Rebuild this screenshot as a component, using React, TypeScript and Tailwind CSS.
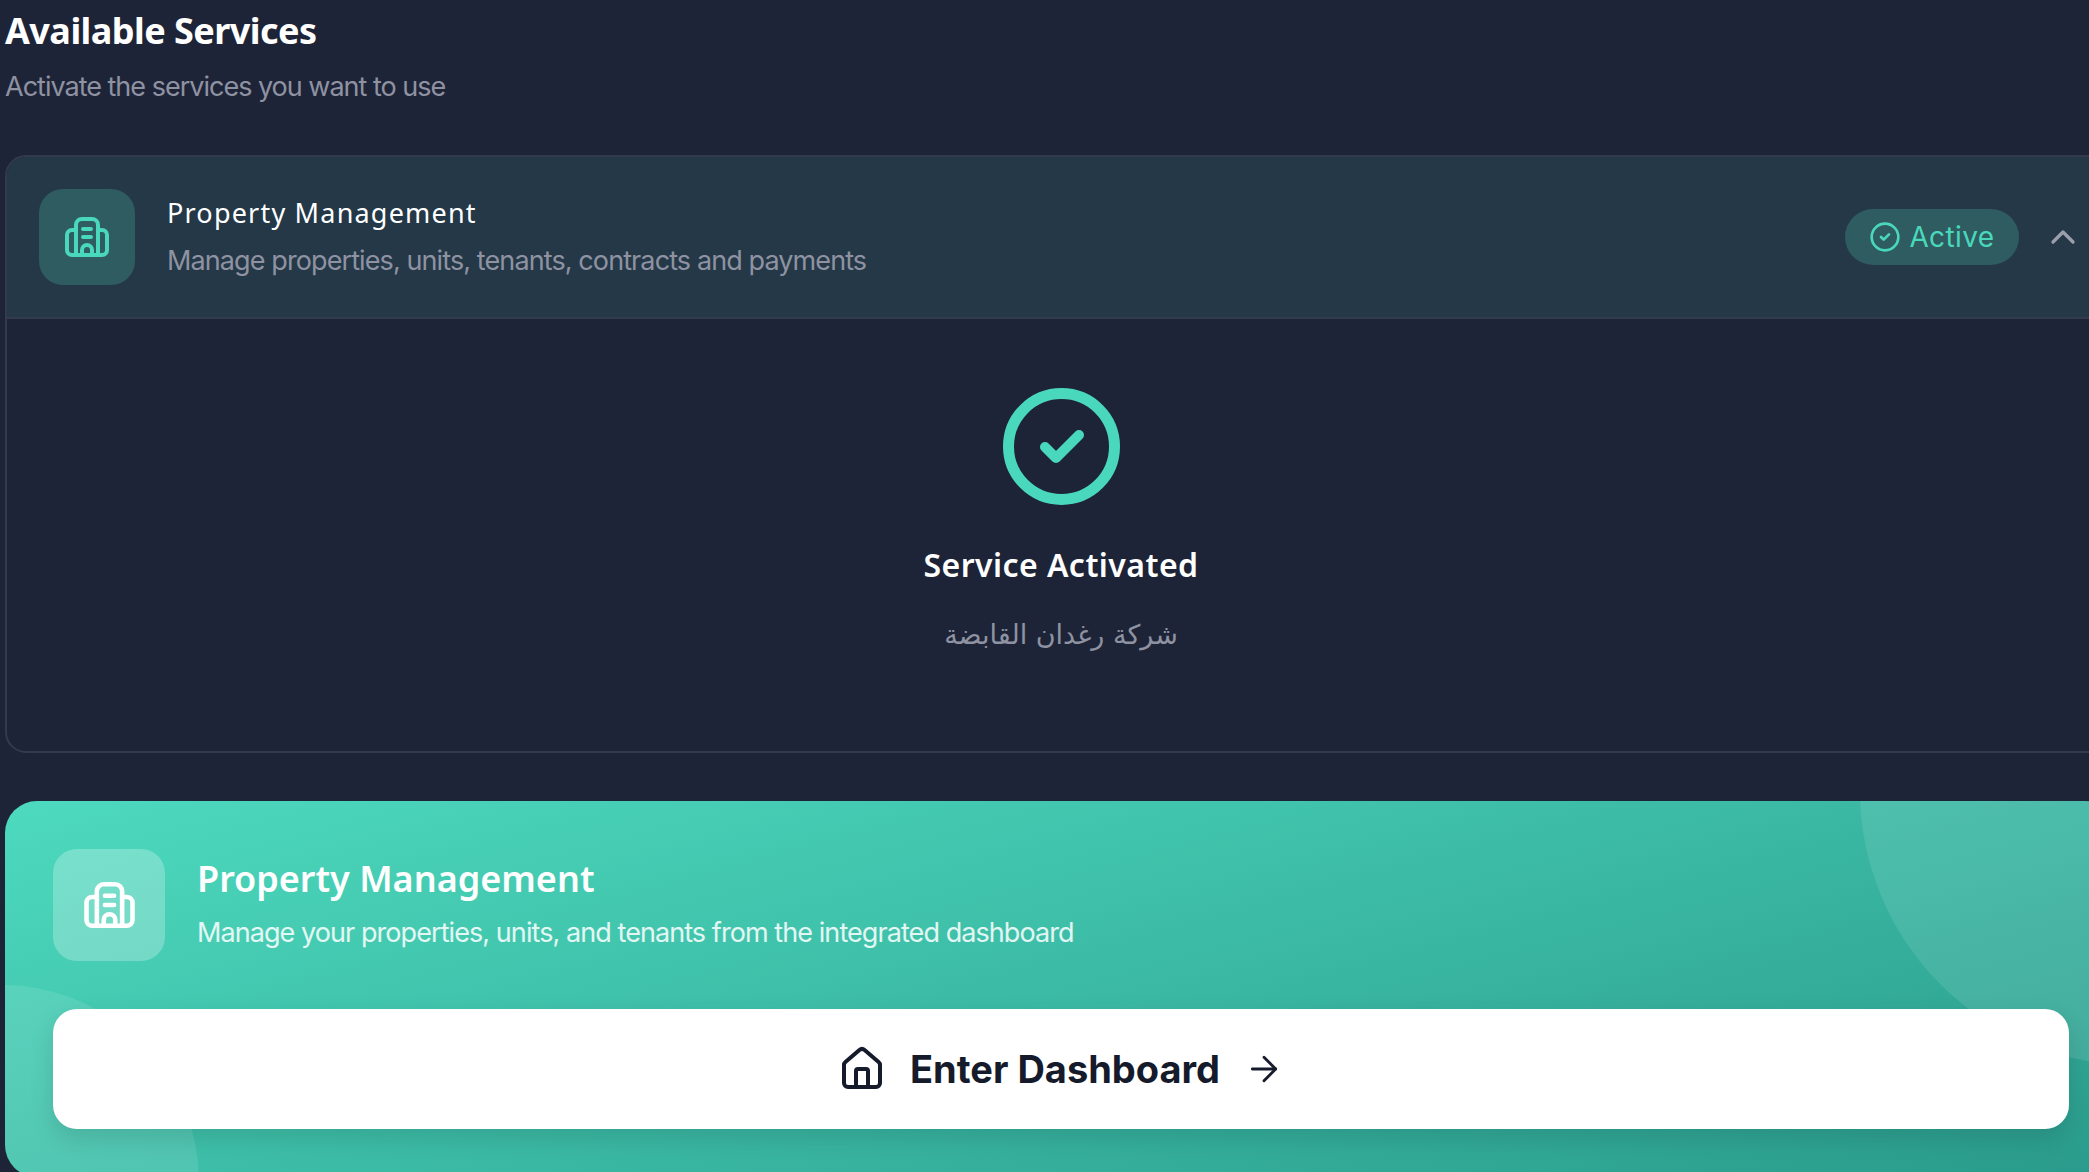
import { ArrowRight, ChevronUp, CircleCheck, House } from 'lucide-react';

function BuildingIcon({ className }: { className: string }) {
  return (
    <svg viewBox="0 0 44 40" fill="none" stroke="currentColor" strokeWidth={4} strokeLinecap="round" strokeLinejoin="round" className={className}>
      <path d="M11 38V8a6 6 0 0 1 6-6h10a6 6 0 0 1 6 6v30" />
      <path d="M11 13H7a5 5 0 0 0-5 5v15a5 5 0 0 0 5 5h30a5 5 0 0 0 5-5V18a5 5 0 0 0-5-5h-4" />
      <path d="M18 12h8M18 20h8" />
      <path d="M17 38v-5a5 5 0 0 1 10 0v5" />
    </svg>
  );
}

export default function App() {
  return (
    <div className="h-screen w-screen overflow-hidden bg-[#1e2438] pl-[5px] font-['Inter',sans-serif]">
      <div className="w-[2112px]">
        <h1 className="pt-[9px] font-['Noto_Sans',sans-serif] text-[36px] leading-[44px] font-bold tracking-[-0.55px] text-white">Available Services</h1>
        <p className="mt-[12px] text-[27px] leading-[44px] tracking-[-1px] text-[#8e92a1]">Activate the services you want to use</p>

        <div className="mt-[46px] overflow-hidden rounded-[21px] border-2 border-[#343a4d]">
          <div className="flex h-[162px] items-center gap-[32px] border-b-2 border-[#343a4d] bg-[#243848] px-[32px]">
            <div className="flex h-[96px] w-[96px] shrink-0 items-center justify-center rounded-[24px] bg-[#2f5c60] text-[#4ad8bd]">
              <BuildingIcon className="h-[40px] w-[44px]" />
            </div>
            <div className="flex-1">
              <div className="font-['Noto_Sans',sans-serif] text-[27px] leading-[40px] tracking-[1.2px] text-white">Property Management</div>
              <div className="mt-[8px] text-[27px] leading-[40px] tracking-[-0.9px] text-[#8e92a1]">Manage properties, units, tenants, contracts and payments</div>
            </div>
            <div className="flex items-center gap-[24px]">
              <div className="flex h-[56px] w-[174px] items-center justify-center gap-[8px] rounded-full bg-[#2f5c60] text-[#4ad8bd]">
                <CircleCheck size={32} />
                <span className="text-[28px] leading-[40px] tracking-[0.4px]">Active</span>
              </div>
              <ChevronUp size={40} className="text-[#9b9eab]" />
            </div>
          </div>
          <div className="flex h-[432px] flex-col items-center pt-[69px]">
            <svg viewBox="0 0 117 117" fill="none" stroke="#4ad8bd" strokeLinecap="round" strokeLinejoin="round" className="h-[117px] w-[117px]">
              <circle cx="58.5" cy="58.5" r="53" strokeWidth="11" />
              <path d="M42 59l11 11 23-23" strokeWidth="10" />
            </svg>
            <div className="mt-[38px] font-['Noto_Sans',sans-serif] text-[32px] leading-[44px] font-semibold tracking-[0.45px] text-white">Service Activated</div>
            <div dir="rtl" className="mt-[26px] font-['DejaVu_Sans',sans-serif] text-[27px] leading-[44px] text-[#8e92a1]">شركة رغدان القابضة</div>
          </div>
        </div>

        <div className="relative mt-[48px] h-[376px] overflow-hidden rounded-[32px] bg-linear-[165deg,#4ddabe,#2a9b8c]">
          <div className="absolute top-[-286px] right-[-293px] h-[550px] w-[550px] rounded-full bg-white/10" />
          <div className="absolute top-[184px] left-[-202px] h-[396px] w-[396px] rounded-full bg-white/10" />
          <div className="relative flex flex-col gap-[48px] p-[48px]">
            <div className="flex items-center gap-[32px]">
              <div className="flex h-[112px] w-[112px] shrink-0 items-center justify-center rounded-[24px] bg-white/25 text-white">
                <BuildingIcon className="h-[46px] w-[51px]" />
              </div>
              <div>
                <div className="-mt-[2px] font-['Noto_Sans',sans-serif] text-[36px] leading-[48px] font-semibold tracking-[0px] text-white">Property Management</div>
                <div className="mt-[10px] text-[27px] leading-[40px] tracking-[-0.93px] text-white/85">Manage your properties, units, and tenants from the integrated dashboard</div>
              </div>
            </div>
            <button className="flex h-[120px] w-full items-center justify-center gap-[24px] rounded-[24px] bg-white text-[#151b2b] shadow-[0_10px_24px_rgba(0,0,0,0.12)]">
              <House size={48} />
              <span className="text-[38px] leading-[48px] font-bold">Enter Dashboard</span>
              <ArrowRight size={40} strokeWidth={1.7} />
            </button>
          </div>
        </div>
      </div>
    </div>
  );
}
